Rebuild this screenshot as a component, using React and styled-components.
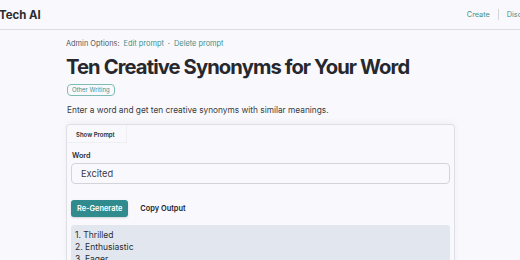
import React from 'react';
import styled, { createGlobalStyle } from 'styled-components';

const Global = createGlobalStyle`
  body {
    margin: 0;
    background: #f9f9fd;
    font-family: Inter, "Noto Sans", sans-serif;
    color: #25262b;
    overflow: hidden;
  }
`;

const Header = styled.header`
  height: 29px;
  display: flex;
  align-items: center;
  justify-content: space-between;
  border-bottom: 1px solid #dcdce2;
  overflow: hidden;
`;

const Brand = styled.div`
  font-size: 11.4px;
  font-weight: 700;
  color: #2a2b30;
  margin-left: -1px;
`;

const Nav = styled.nav`
  display: flex;
  align-items: center;
  gap: 8px;
  margin-right: -17px;
  font-size: 7.3px;
  color: #3f8f8a;
`;

const NavSep = styled.span`
  width: 1px;
  height: 11px;
  background: #d4d4da;
`;

const Main = styled.main`
  padding: 9px 0 0 66px;
  width: 389px;
`;

const Admin = styled.div`
  font-size: 7.4px;
  line-height: 10px;
  color: #55565c;
  display: flex;
  gap: 4px;
`;

const AdminLink = styled.span`
  color: #3f8f8a;
`;

const Title = styled.h1`
  margin: 7px 0 0;
  font-size: 20.2px;
  font-weight: 700;
  letter-spacing: -0.9px;
  color: #27282d;
  line-height: 22px;
`;

const Tags = styled.div`
  margin-top: 6px;
  display: flex;
`;

const Badge = styled.span`
  margin-left: 1px;
  padding: 1px 4px;
  font-size: 6px;
  color: #3f8f8a;
  border: 1px solid #7dbdb5;
  border-radius: 4px;
  line-height: 8px;
`;

const Desc = styled.p`
  margin: 8px 0 0 1px;
  font-size: 8.3px;
  line-height: 12px;
  color: #3a3b40;
`;

const Card = styled.section`
  margin-top: 8px;
  border: 1px solid #dedee4;
  border-bottom: none;
  border-radius: 4px 4px 0 0;
  box-shadow: 0 -2px 6px rgba(0, 0, 0, 0.04);
  padding: 0 4px;
  height: 140px;
`;

const ShowPrompt = styled.button`
  display: block;
  margin-left: -4px;
  height: 18px;
  font-family: inherit;
  font-size: 6px;
  font-weight: 600;
  color: #2a2b30;
  background: transparent;
  border: none;
  border-right: 1px solid #efeff3;
  border-bottom: 1px solid #efeff3;
  padding: 1px 11px 0 9px;
`;

const Label = styled.div`
  margin: 8px 0 0 1px;
  font-size: 7.2px;
  line-height: 10px;
  font-weight: 600;
  color: #2a2b30;
`;

const Input = styled.div`
  margin-top: 2px;
  height: 19px;
  border: 1px solid #d3d3da;
  border-radius: 4px;
  display: flex;
  align-items: center;
  padding-left: 9px;
  font-size: 9.3px;
  color: #3a3b40;
`;

const Actions = styled.div`
  display: flex;
  align-items: center;
  gap: 5px;
  margin-top: 16px;
`;

const Button = styled.button`
  font-family: inherit;
  font-size: 7.4px;
  font-weight: 600;
  border-radius: 3px;
  border: none;
  padding: 0 ${p => (p.$primary ? 6 : 7)}px;
  height: 17px;
  background: ${p => (p.$primary ? '#2f8b8d' : 'transparent')};
  color: ${p => (p.$primary ? '#ffffff' : '#25262b')};
  box-shadow: ${p => (p.$primary ? '0 1px 2px rgba(0,0,0,0.15)' : 'none')};
`;

const Output = styled.div`
  margin-top: 8px;
  background: #e2e6ee;
  border-radius: 3px 3px 0 0;
  padding: 4px 4px;
  font-size: 8.5px;
  line-height: 12px;
  color: #2c2d32;
`;

const items = ['Thrilled', 'Enthusiastic', 'Eager'];

export default function App() {
  return (
    <>
      <Global />
      <Header>
        <Brand>Tech AI</Brand>
        <Nav>
          <span>Create</span>
          <NavSep />
          <span>Discover</span>
        </Nav>
      </Header>
      <Main>
        <Admin>
          Admin Options: <AdminLink>Edit prompt</AdminLink> · <AdminLink>Delete prompt</AdminLink>
        </Admin>
        <Title>Ten Creative Synonyms for Your Word</Title>
        <Tags>
          <Badge>Other Writing</Badge>
        </Tags>
        <Desc>Enter a word and get ten creative synonyms with similar meanings.</Desc>
        <Card>
          <ShowPrompt>Show Prompt</ShowPrompt>
          <Label>Word</Label>
          <Input>Excited</Input>
          <Actions>
            <Button $primary>Re-Generate</Button>
            <Button>Copy Output</Button>
          </Actions>
          <Output>
            {items.map((w, i) => (
              <div key={w}>{i + 1}. {w}</div>
            ))}
          </Output>
        </Card>
      </Main>
    </>
  );
}
